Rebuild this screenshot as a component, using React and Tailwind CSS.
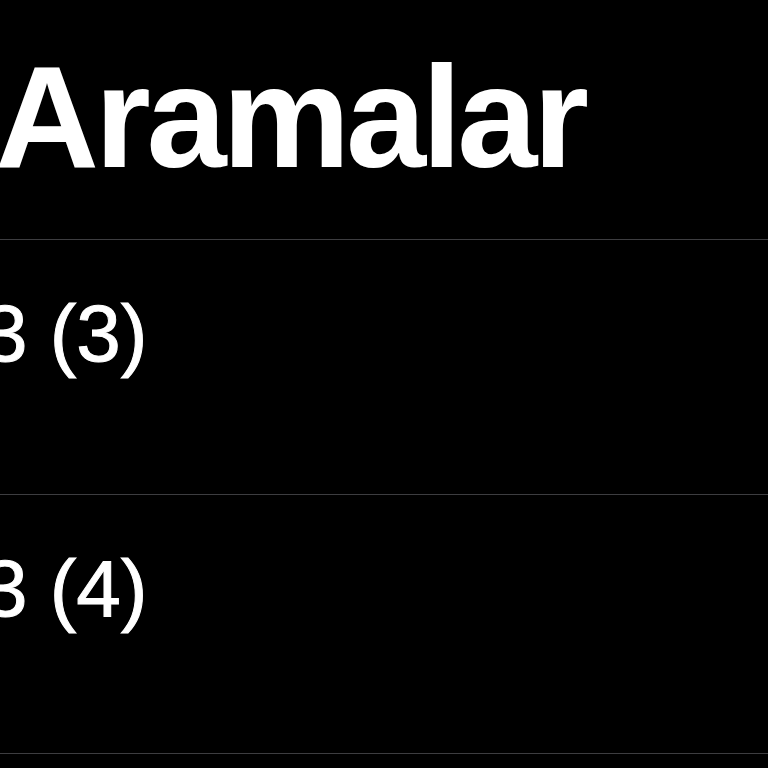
export default function App() {
  const rows = ["3 (3)", "3 (4)"];
  return (
    <div
      className="h-[768px] w-[768px] overflow-hidden bg-black text-white"
      style={{ fontFamily: '"Liberation Sans", Arial, sans-serif' }}
    >
      <div className="h-[240px] border-b border-[#3d3d40] pt-[46px]">
        <h1 className="-ml-[5px] whitespace-nowrap text-[144px] font-bold leading-none tracking-[-0.03em]">
          Aramalar
        </h1>
      </div>
      {rows.map((r, i) => (
        <div
          key={r}
          className={`border-b border-[#3d3d40] pt-[54px] ${i === 0 ? "h-[255px]" : "h-[259px]"}`}
        >
          <div className="-ml-[17px] whitespace-nowrap text-[80px] leading-none [-webkit-text-stroke:1px_white]">
            {r}
          </div>
        </div>
      ))}
    </div>
  );
}
